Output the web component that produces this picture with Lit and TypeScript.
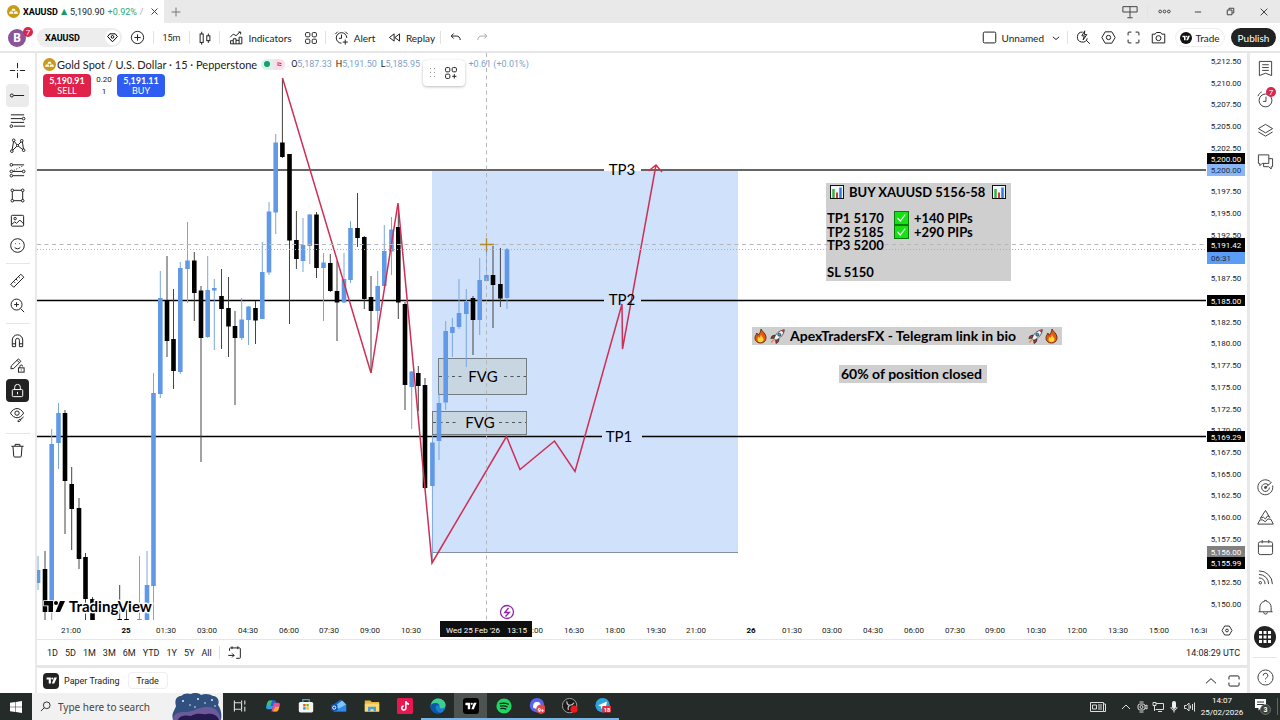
import { LitElement, html, svg, css, nothing } from "lit";
import { customElement } from "lit/decorators.js";
import { classMap } from "lit/directives/class-map.js";

/* ---------- icons ---------- */

const glyphs: Record<string, any> = {
  cross: svg`<path d="M9 1v5.500M9 11.500V17M1 9h5.500M11.500 9H17M8.500 9h1"/>`,
  ray: svg`<circle cx="3" cy="9" r="1.600"/><path d="M4.800 9H16"/>`,
  fib: svg`<path d="M2 3h14M2 7h12M2 11h14M5 15h12"/><circle cx="15.500" cy="7" r="1.400" fill="#fff"/><circle cx="2.500" cy="15" r="1.400" fill="#fff"/>`,
  pattern: svg`<path d="M3 15 5 4l4 5 5-5 1.500 10L9 9z"/><circle cx="5" cy="3.500" r="1.400" fill="#fff"/><circle cx="13.500" cy="4" r="1.400" fill="#fff"/><circle cx="3" cy="15" r="1.400" fill="#fff"/><circle cx="15.500" cy="14" r="1.400" fill="#fff"/><circle cx="9" cy="9" r="1.100" fill="#fff"/>`,
  position: svg`<path d="M4 3h12M4 10h12M4 14.500h12"/><path d="m5 9 10-5" stroke-dasharray="1.200 1.800"/><circle cx="2.500" cy="3" r="1.400" fill="#fff"/><circle cx="2.500" cy="10" r="1.400" fill="#fff"/><circle cx="2.500" cy="14.500" r="1.400" fill="#fff"/><circle cx="15.500" cy="10" r="1.400" fill="#fff"/>`,
  shape: svg`<path d="M3.500 3.500h11v11h-11z"/><circle cx="3.500" cy="3.500" r="1.400" fill="#fff"/><circle cx="14.500" cy="3.500" r="1.400" fill="#fff"/><circle cx="3.500" cy="14.500" r="1.400" fill="#fff"/><circle cx="14.500" cy="14.500" r="1.400" fill="#fff"/>`,
  image: svg`<rect x="2.500" y="3.500" width="13" height="11.500" rx="1"/><circle cx="6.500" cy="7" r="1.300"/><path d="m3 13 3-2.500 2 1.500 3.500-3.500 4 4"/>`,
  smile: svg`<circle cx="9" cy="9" r="7.200"/><path d="M6 11c1.500 2 4.500 2 6 0"/><path d="M6.800 6.700v.8M11.200 6.700v.8"/>`,
  ruler: svg`<path d="M1.800 13 12.500 2.300l3.200 3.200L5 16.200z"/><path d="m5 10 1.500 1.500M7.500 7.500 9 9M10 5l1.500 1.500"/>`,
  zoom: svg`<circle cx="8" cy="8" r="5.800"/><path d="M8 5.500v5M5.500 8h5M12.300 12.300 16 16"/>`,
  magnet: svg`<path d="M3.500 15.500V8.500a5.500 5.500 0 0 1 11 0v7h-3.500V8.700a2 2 0 0 0-4 0v6.800zM3.500 12.500H7M11 12.500h3.500"/>`,
  penlock: svg`<path d="m2 12.500.4-3L10 2l2.600 2.600L5 12.100zM8.500 3.500l2.600 2.600"/><rect x="10" y="11.500" width="6" height="4.500"/><path d="M11.500 11.500V10a1.500 1.500 0 0 1 3 0M13 13.200v1"/>`,
  lock: svg`<rect x="3.500" y="8" width="11" height="7.500" rx="1"/><path d="M6 8V5.500a3 3 0 0 1 6 0V8M9 10.500v2.500"/>`,
  eye: svg`<path d="M1.500 6.500c4-6.500 10-6.500 14 0-4 6.500-10 6.500-14 0z"/><circle cx="8.500" cy="6.500" r="2.300"/><path d="M9.500 15.500c0-2 1.500-2.500 3-2.500 0 2-1.500 2.500-3 2.500zm3-2.500 3-2.500"/>`,
  trash: svg`<path d="M2.500 4.500h13M6.500 4.300V2.500h5v1.800M4.200 4.500l.8 10.500a1 1 0 0 0 1 .9h6a1 1 0 0 0 1-.9l.8-10.500"/>`,
  plus: svg`<circle cx="9" cy="9" r="6.500"/><path d="M9 5.700v6.600M5.700 9h6.600"/>`,
  gem: svg`<path d="M4.500 3h9L17 7.500 9 16 1 7.500z"/><circle cx="9" cy="8" r="2.200"/>`,
  candles: svg`<rect x="3.500" y="4.500" width="3.500" height="9.500"/><path d="M5.250 2v2.500M5.250 14v2.500"/><rect x="11" y="6.500" width="3.500" height="5.500"/><path d="M12.750 4v2.500M12.750 12v2.500"/>`,
  indicators: svg`<path d="M2 16.500v-4h3.500v-2.500H9v2h4V8h3.500v8.500zM5.500 12.500v4M9 12v4.500M13 12v4.500"/><path d="m1.500 8 4-4L9 6l5-4.500M12 1.300h3v3"/>`,
  grid: svg`<rect x="2" y="2" width="5.500" height="5.500" rx="1.500"/><rect x="10.500" y="2" width="5.500" height="5.500" rx="1.500"/><rect x="2" y="10.500" width="5.500" height="5.500" rx="1.500"/><rect x="10.500" y="10.500" width="5.500" height="5.500" rx="1.500"/>`,
  gridplus: svg`<rect x="2" y="2" width="5.500" height="5.500" rx="1.500"/><rect x="10.500" y="2" width="5.500" height="5.500" rx="1.500"/><rect x="2" y="10.500" width="5.500" height="5.500" rx="1.500"/><path d="M13.250 10.500v5.500M10.500 13.250H16"/>`,
  alarm: svg`<path d="M15.300 9.500A6.300 6.300 0 1 0 9 15.800"/><path d="M9 5.500V10H6M1.500 5 4.500 2M16.500 5l-3-3M13.500 11.500v6M10.500 14.500h6"/>`,
  replay: svg`<path d="M8.500 4v10L2 9zM16 4v10L9.500 9z"/>`,
  undo: svg`<path d="M6.500 3.500 3 7l3.500 3.500M3.500 7h6.500c3.500 0 5.500 2 5.500 5.500"/>`,
  redo: svg`<path d="M11.500 3.500 15 7l-3.500 3.500M14.500 7H8c-3.500 0-5.500 2-5.500 5.500"/>`,
  square: svg`<rect x="1.500" y="2.500" width="15" height="13" rx="1.500"/>`,
  chevron: svg`<path d="m5 7.500 4 3.500 4-3.500"/>`,
  up: svg`<path d="m2.500 12 6.500-6 6.500 6"/>`,
  quick: svg`<path d="M8 2.500A6 6 0 1 0 13.500 10M12 12l4.500 4.500"/><path d="M10.500 1 7 7h3l-1.500 5L13 5.500h-3z" fill="#fff"/>`,
  gear: svg`<path d="M5 2.200h8L17 9l-4 6.800H5L1 9z"/><circle cx="9" cy="9" r="2.600"/>`,
  full: svg`<path d="M2.500 6.500v-3a1 1 0 0 1 1-1h3M11.500 2.500h3a1 1 0 0 1 1 1v3M15.500 11.500v3a1 1 0 0 1-1 1h-3M6.500 15.500h-3a1 1 0 0 1-1-1v-3"/>`,
  camera: svg`<path d="M1.500 5h3.500l1.500-2h5L13 5h3.500v10.500h-15z"/><circle cx="9" cy="9.800" r="3"/>`,
  list: svg`<path d="M2.500 1.500h13v15L9 14l-6.500 2.500zM5.500 5h7M5.500 8h7M5.500 11h7"/>`,
  clock: svg`<circle cx="9" cy="10" r="6.800"/><path d="M9.500 6v5H6.500M1 5.500C2 3 3 2 5 1"/>`,
  layers: svg`<path d="m9 2.500 7.500 4.500L9 11.500 1.500 7zM1.500 10.500 9 15l7.500-4.500"/>`,
  chat: svg`<path d="M1.500 2h11v9h-7l-2.500 2.500V11H1.500zM12.500 6h4v8.500H15V17l-2.500-2.500H7V11"/>`,
  target: svg`<path d="M14.600 3.400A7.900 7.900 0 1 0 16.500 7"/><path d="M12 6.300A4.100 4.100 0 1 0 13.100 9"/><circle cx="9" cy="9" r="1.100" fill="currentColor"/><path d="m9 9 6.500-5.500"/>`,
  pyramid: svg`<path d="M9 1.500 3.500 10l3.200-1.500L8.800 10.500 11.500 7l2 2z"/><path d="M3 11.500.8 16h16.400l-2.400-5-3.300-.5-2.700 3-3-2z"/>`,
  calendar: svg`<rect x="1.500" y="3" width="15" height="13.500" rx="2"/><path d="M1.500 7.500h15M5.500 1v3.500M12.500 1v3.500"/>`,
  feed: svg`<circle cx="3.500" cy="14.500" r="1.300"/><path d="M2 9.500a6 6 0 0 1 6.500 6.500M2 5.800A10 10 0 0 1 12.300 16M2 2a14 14 0 0 1 14.300 14"/>`,
  bell: svg`<path d="M1.500 13.500h15M3 13.500V9c0-3.500 2-6 5-6.500V1.500h2v1C13 3 15 5.500 15 9v4.500M7 14a2 2 0 0 0 4 0"/>`,
  help: svg`<circle cx="9" cy="9" r="8"/><path d="M6.500 7a2.500 2.500 0 1 1 3.500 2.300c-.8.400-1 .8-1 1.700M9 12.800v.8"/>`,
  goto: svg`<path d="M3 7V4.500a1 1 0 0 1 1-1h11a1 1 0 0 1 1 1V15a1 1 0 0 1-1 1h-4M6 1.500v3.500M13 1.500v3.500M1.500 12.500h7M6 10l2.500 2.500L6 15"/>`,
  split: svg`<path d="M2.500 7V4a1.500 1.500 0 0 1 1.500-1.500h10A1.500 1.500 0 0 1 15.500 4v3M15.500 11v3a1.500 1.500 0 0 1-1.500 1.500H4A1.500 1.500 0 0 1 2.500 14v-3"/>`,
  close: svg`<path d="m3 3 12 12M15 3 3 15"/>`,
  add: svg`<path d="M9 1v16M1 9h16"/>`,
  min: svg`<path d="M2 9h14"/>`,
  restore: svg`<path d="M2.500 6h9.500v9.500H2.500zM6 5.500V2.500h9.500V12H12.500"/>`,
  more: svg`<circle cx="3" cy="9" r="1.900"/><circle cx="9" cy="9" r="1.900"/><circle cx="15" cy="9" r="1.900"/>`,
  layout: svg`<path d="M1 3h16v6H1zM9 3v12M6 15.500h6"/>`,
  search: svg`<circle cx="11" cy="7" r="5.500"/><path d="m7 11-5.500 5.500"/>`,
  tradeview: svg`<path d="M1 4h7v10H4.500V7.500H1z" fill="currentColor" stroke="none"/><circle cx="10.300" cy="5.800" r="1.700" fill="currentColor" stroke="none"/><path d="M13.500 4H18l-4.500 10H9.500z" fill="currentColor" stroke="none"/>`,
};

const icon = (name: string, size = 16, weight = 1) => html`
  <svg width=${size} height=${size} viewBox="0 0 18 18" fill="none" stroke="currentColor"
    stroke-width=${(weight * 18) / size} aria-hidden="true">${glyphs[name]}</svg>`;

const coin = html`<svg width="13" height="13" viewBox="0 0 18 18" aria-hidden="true">
  <circle cx="9" cy="9" r="9" fill="#c99a17"/>
  <path d="M7.200 5.200h3.600l1 2.800H6.200zM3.800 9h4l1 3H2.800zM10.200 9h4l1 3H9.200z" fill="#fff"/></svg>`;

const base = css`
  * { box-sizing: border-box; }
  button, input { font: inherit; color: inherit; border: 0; background: none; padding: 0; margin: 0; }
  button { display: inline-flex; align-items: center; justify-content: center; flex: none; white-space: nowrap; cursor: pointer; }
  svg { display: block; flex: none; }
`;

/* ---------- chart ---------- */

// x centre, wick top, wick bottom, body top, body bottom, rising
type Candle = [number, number, number, number, number, number];
const candles: Candle[] = [
  [38, 556, 590, 570, 583, 1], [45, 551, 620, 569, 612, 0], [51.7, 429, 620, 444, 606, 1],
  [58.500, 403, 469, 413, 443, 1], [65, 410, 534, 413, 481, 0], [71.700, 467, 550, 484, 509, 0],
  [79, 498, 569, 508, 559, 0], [85.500, 553, 620, 557, 599, 0], [92.500, 597, 620, 599, 620, 0],
  [119.700, 585, 620, 619, 620, 0], [126.500, 609, 620, 619, 620, 0], [139.500, 556, 620, 619, 620, 1],
  [147, 551, 620, 585, 620, 1], [153.500, 373, 620, 393, 586, 1], [160.300, 271, 398, 298, 394, 1],
  [167, 256, 357, 300, 341, 0], [173.500, 289, 389, 339, 371, 0], [180.300, 262, 374, 268, 372, 1],
  [187.500, 222, 303, 260.500, 269, 1], [194.300, 252, 321, 260.500, 293, 0], [201, 286, 462, 290.500, 338, 0],
  [207.700, 256, 338, 290, 337, 1], [214.300, 279, 350, 288, 290.500, 1], [221.500, 269, 349, 296, 309, 0],
  [228.500, 277, 357, 308, 326.500, 0], [235, 311, 405, 326, 338, 0], [241.700, 298, 340, 319.500, 338, 1],
  [248.500, 306, 345, 306.500, 320, 1], [255.500, 301, 344, 308, 320.500, 0], [262.300, 242, 319, 272, 319, 1],
  [269, 202, 275, 211.500, 272.500, 1], [275.700, 134, 234, 142.500, 212.500, 1], [282.400, 78, 158, 142.500, 157, 0],
  [289.500, 154, 324, 154, 240.500, 0], [296.400, 211, 269, 240, 259, 0], [303, 218, 272, 245, 261, 1],
  [309.800, 214, 264, 214.500, 246, 1], [316.500, 212, 278, 214.500, 268, 0], [323.500, 253, 321, 262.500, 268, 1],
  [330.300, 254, 292, 263, 291, 0], [337, 261, 341, 291, 302.500, 0], [344, 253, 303, 279, 302.500, 1],
  [350.500, 221, 283, 228, 280, 1], [357.500, 193, 247, 228, 238, 0], [364.300, 236, 309, 237, 299, 0],
  [371, 276, 372, 297, 311, 0], [377.700, 271, 330, 286, 311, 1], [384.300, 225, 288, 251, 286, 1],
  [391.500, 217, 275, 229.500, 251.500, 1], [398.300, 205, 319, 227, 302.500, 0], [405, 302, 410, 304, 385, 0],
  [411.700, 371, 429, 371.500, 387, 1], [418.300, 366, 411, 373, 386, 0], [425, 378, 489, 385, 488, 0],
  [432.400, 435, 560, 442.500, 486, 1], [439, 393, 460, 403, 441, 1], [445.700, 321, 410, 331, 402.500, 1],
  [452.400, 318, 357, 327, 333, 1], [459, 279, 329, 313, 327, 1], [466.300, 289, 367, 302, 314, 1],
  [473, 296, 355, 298, 320, 0], [479.700, 258, 335, 280, 320, 1], [486.500, 250, 282, 275, 281, 1],
  [493, 246, 328, 275, 285, 0], [500.400, 248, 307, 284, 298.500, 0], [507, 248, 309, 249, 298, 1],
];

const TOP_PRICE = 5212.5;
const priceY = (p: number) => 61 + (TOP_PRICE - p) * 8.688;
const fmt = (p: number) => p.toLocaleString("en-US", { minimumFractionDigits: 2, maximumFractionDigits: 2 });
// ticks that lie wholly under a price tag are left out
const covered = [5200, 5190, 5185, 5155];
const ticks = Array.from({ length: 26 }, (_, i) => TOP_PRICE - i * 2.5).filter((p) => !covered.includes(p));

const times: [number, string, boolean?][] = [
  [71, "21:00"], [126, "25", true], [166, "01:30"], [207, "03:00"], [248, "04:30"], [289, "06:00"],
  [329, "07:30"], [370, "09:00"], [411, "10:30"], [533, "15:00"], [574, "16:30"], [615, "18:00"],
  [656, "19:30"], [696, "21:00"], [751, "26", true], [792, "01:30"], [832, "03:00"], [873, "04:30"],
  [914, "06:00"], [955, "07:30"], [995, "09:00"], [1036, "10:30"], [1077, "12:00"], [1118, "13:30"],
  [1159, "15:00"], [1200, "16:30"],
];

const priceTags: [number, number, string, string, string][] = [
  [153, 11, "5,200.00", "#000", "#fff"], [164, 12, "5,200.00", "#8ab6f5", "#1d2a44"],
  [252, 12, "06:31", "#5b9cf6", "#1d2a44"], [238, 14, "5,191.42", "#000", "#fff"],
  [295, 11, "5,185.00", "#000", "#fff"], [431, 11, "5,169.29", "#000", "#fff"],
  [546, 11, "5,156.00", "#808080", "#fff"], [557, 12, "5,155.99", "#000", "#fff"],
];

const levels: [number, number, number, string][] = [
  [170, 604, 641, "TP3"], [300.5, 604, 641, "TP2"], [436.5, 602, 642, "TP1"],
];

const zones: [number, number, number, number][] = [[438.5, 358.5, 88, 36], [432.5, 411.5, 94, 23]];

const barChart = (x: number, y: number) => svg`<g transform="translate(${x} ${y})">
  <rect x=".5" y=".5" width="13" height="13" fill="#f4f7fa" stroke="#111"/>
  <path d="M3.500 4v9" stroke="#2fb344" stroke-width="2.500"/><path d="M7 7.500V13" stroke="#d33" stroke-width="2"/><path d="M10.500 2.500V13" stroke="#2a7de1" stroke-width="2.500"/></g>`;
const check = (x: number, y: number) => svg`<g transform="translate(${x} ${y})">
  <rect x=".5" y=".5" width="14" height="13" fill="#17e017" stroke="#0a7a0a"/>
  <path d="m3.500 7 2.800 3 5-6.500" fill="none" stroke="#fff" stroke-width="1.200"/></g>`;
const flame = (x: number, y: number) => svg`<g transform="translate(${x} ${y})">
  <path d="M7 0c1 2.500 4.500 4 5 8 .4 3.800-2.300 6-5.500 6S.700 11.800 1 8.500C1.200 6.500 2.300 5.800 2.800 4c.8.700 1.200 1.500 1.300 2.300C5.800 4.500 6.800 2.500 7 0z" fill="#e8590c" stroke="#4a1c05" stroke-width=".8"/>
  <path d="M6.800 5.500c.6 2 2.700 2.800 2.700 5 0 1.800-1.300 2.700-3 2.700s-3-1-3-2.700c0-1.300.8-1.800 1.200-2.700.5.400.7.700.8 1.100.8-.9 1.200-2 1.300-3.400z" fill="#ffd43b"/></g>`;
const rocket = (x: number, y: number) => svg`<g transform="translate(${x} ${y})" stroke="#222" stroke-width=".7">
  <path d="M5 6 2 7 .800 9.500 4.500 9zM9 10l-.8 3L6 14.500 5.700 11z" fill="#c92a3c"/>
  <path d="M4 9.500C5.500 5 9 1.500 14.300.700 14 5.500 10.500 9 5.800 11.300z" fill="#eef3f7"/>
  <path d="M11 1.600 14.300.700 13.700 4z" fill="#c92a3c" stroke="none"/><circle cx="9.300" cy="5.700" r="1.500" fill="#3ba3d8"/>
  <path d="M4 10.500 1.300 13.500" stroke="#f08c1a" stroke-width="1.500"/></g>`;

@customElement("price-chart")
class PriceChart extends LitElement {
  static styles = css`
    :host { display: block; min-height: 0; }
    .plot { display: block; width: 100%; height: 100%; }
    .axis { font: 8px Roboto, sans-serif; fill: #222; text-anchor: middle; }
    .day { font-weight: 700; fill: #000; }
    .level { font: 15px Lato, sans-serif; text-anchor: middle; fill: #000; }
    .note { font: 700 13px Lato, sans-serif; fill: #000; }
    .caption { font: 700 14px Lato, sans-serif; fill: #000; }
    .brand { font: 700 15px Lato, sans-serif; fill: #000; stroke: #fff; stroke-width: 3px; paint-order: stroke; }
    .line { fill: none; stroke: #cf2f55; stroke-width: 1.5; }
  `;

  private candle([x, hi, lo, top, bottom, up]: Candle) {
    return svg`<path d="M${x} ${hi}V${lo}" stroke=${up ? "#7ba7dc" : "#444"} stroke-width="1"/>
      <rect x=${x - 2.3} y=${top} width="4.600" height=${bottom - top} fill=${up ? "#6199e6" : "#000"}/>`;
  }

  render() {
    return html`<svg class="plot" viewBox="37 53 1210 587" preserveAspectRatio="xMinYMin meet" role="img" aria-label="XAUUSD 15 minute chart">
      <rect x="432" y="171" width="306" height="381" fill="#cfe1fb"/>
      <path d="M432 552.500H738" stroke="#8291a5"/>
      ${zones.map(([x, y, w, h]) => svg`<rect x=${x} y=${y} width=${w} height=${h} fill="#c8d6e2" stroke="#737d83"/>`)}
      <path d="M439 376.500h25M504 376.500h22M433 422.500h26M499 422.500h27" stroke="#4d565c" stroke-dasharray="3 3.500"/>
      ${levels.map(([y, a, b]) => svg`<path d="M37 ${y}H${a}M${b} ${y}H1206" stroke=${y === 170 ? "#333" : "#000"} stroke-width="1.500"/>`)}
      ${candles.map((c) => this.candle(c))}
      <path class="line" d="M282.500 78 371 373 398 203 432 563 506.500 436.500 520 469.500 554.500 441 575 471.500 622 304 622.500 349 656 165M648.500 171 656 165 662 172"/>
      <text class="level" x="622" y="175">TP3</text>
      <text class="level" x="622" y="305">TP2</text>
      <text class="level" x="619" y="442">TP1</text>
      <text class="level" x="483" y="382">FVG</text>
      <text class="level" x="480" y="428">FVG</text>

      <rect x="826" y="183" width="185" height="98" fill="#cfcfcf"/>
      <rect x="752" y="327" width="310" height="18" fill="#cfcfcf"/>
      <rect x="839" y="365" width="148" height="18" fill="#cfcfcf"/>
      <path d="M37 244.500H1206M486.500 53V620" stroke="#b4b6bb" stroke-dasharray="4 3.500"/>
      <path d="M37 249.500H1206" stroke="#9db3cc" stroke-dasharray="1 2"/>
      <path d="M480 244.500h14M486.500 238v14" stroke="#b08a2c" stroke-width="1.300"/>

      ${barChart(830, 185)}${barChart(992, 185)}${check(894, 211)}${check(894, 225)}
      <text class="note"><tspan x="849" y="197">BUY XAUUSD 5156-58</tspan>
        <tspan x="827" y="223">TP1 5170</tspan><tspan x="914">+140 PIPs</tspan>
        <tspan x="827" y="237">TP2 5185</tspan><tspan x="914">+290 PIPs</tspan>
        <tspan x="827" y="250">TP3 5200</tspan>
        <tspan x="827" y="277">SL 5150</tspan></text>
      ${flame(754, 329)}${rocket(770, 329)}
      <text class="caption" x="790" y="341">ApexTradersFX - Telegram link in bio</text>
      ${rocket(1028, 329)}${flame(1045, 329)}
      <text class="caption" x="841" y="379">60% of position closed</text>

      <g transform="translate(43 599)"><path d="M1 2h9v11H5.500V6.500H1z" fill="#000" stroke="#fff" stroke-width="1.500" paint-order="stroke"/>
        <circle cx="13" cy="4" r="2" fill="#000"/><path d="M17 2h5l-5 11h-4.500z" fill="#000"/></g>
      <text class="brand" x="69" y="612">TradingView</text>
      <circle cx="507" cy="612" r="6.500" fill="#fff" stroke="#8e24aa" stroke-width="1.300"/>
      <path d="m508.500 608-3.800 4.500h4.600l-3.800 4" fill="none" stroke="#8e24aa" stroke-width="1.300"/>

      ${ticks.map((p) => svg`<text class="axis" x="1226" y=${Math.round(priceY(p)) + 3}>${fmt(p)}</text>`)}
      ${priceTags.map(([y, h, label, bg, ink]) => svg`<rect x="1207" y=${y} width="38" height=${h} fill=${bg}/>
        <text class="axis" x=${label.length < 6 ? 1221 : 1226} y=${y + h / 2 + 3} style="fill:${ink}">${label}</text>`)}
      ${times.map(([x, label, day]) => svg`<text class=${day ? "axis day" : "axis"} x=${x} y="633">${label}</text>`)}
      <rect x="1207" y="622" width="40" height="16" fill="#fff"/>
      <path d="M1224.700 626h4.600l2.700 4.500-2.700 4.500h-4.600l-2.700-4.500z" fill="none" stroke="#333"/><circle cx="1227" cy="630.500" r="1.400" fill="none" stroke="#333"/>
      <rect x="440" y="621" width="92" height="16" fill="#0f0f0f"/>
      <text class="axis" x="473" y="633" style="fill:#fff">Wed 25 Feb '26</text>
      <text class="axis" x="517" y="633" style="fill:#fff">13:15</text>
      <path d="M37 639.500H1247" stroke="#e6e6e6"/>
    </svg>`;
  }
}

/* ---------- taskbar ---------- */

const apps: [string, any, string?][] = [
  ["Task view", svg`<path d="M3 3v14M3 6h9v8H3M12 3v2M12 15v2M16 3v5M16 11v6" fill="none" stroke="#ddd" stroke-width="1.400"/>`],
  ["Copilot", svg`<path d="M6 3h6l-3 11H4c-3 0-3-2-2-5 .8-3 1.500-6 4-6z" fill="#2d9bf0"/><path d="M2 9c1-4 2-6 4-6h3L6 11z" fill="#35c26b"/><path d="M14 17H8l3-11h5c3 0 3 2 2 5-.8 3-1.500 6-4 6z" fill="#e0529c"/><path d="M14 17h-4l3-6h5c-1 4-2 6-4 6z" fill="#f5a623"/><path d="M9 3h3c1.500 0 2 1 2.300 3H11l-1 4H7z" fill="#2b5fd9"/>`],
  ["Store", svg`<path d="M6 5V2h8v3" fill="none" stroke="#3bb0ee" stroke-width="1.500"/><rect x="1" y="5" width="18" height="13" rx="2" fill="#f4f4f4"/><path d="M6.500 7.500h3v3h-3z" fill="#f25022"/><path d="M10.500 7.500h3v3h-3z" fill="#7fba00"/><path d="M6.500 11.500h3v3h-3z" fill="#00a4ef"/><path d="M10.500 11.500h3v3h-3z" fill="#ffb900"/>`],
  ["Outlook", svg`<path d="m3 8 9-6 7 6v9H3z" fill="#1d63c9"/><path d="m6 9 8-6 5 5-9 7z" fill="#7cc7f7"/><path d="m3 17 16-9v9z" fill="#2f8bea"/><rect x="0" y="8" width="8" height="8" rx="1.500" fill="#0f4fa8"/><circle cx="4" cy="12" r="2" fill="none" stroke="#fff" stroke-width="1.200"/>`],
  ["Files", svg`<path d="M1 3h7l1.500 2H19v12H1z" fill="#e8b63a"/><path d="M1 7h18v10H1z" fill="#fbd972"/><path d="M5 17v-6h10v6h-3v-3H8v3z" fill="#4a9fd8"/>`],
  ["TikTok", svg`<rect width="20" height="20" rx="2" fill="#e8174f"/><path d="M11 4v8.500a2.500 2.500 0 1 1-2.500-2.500M11 4c.3 2.300 1.700 3.500 4 3.700" fill="none" stroke="#fff" stroke-width="2"/>`],
  ["Edge", svg`<circle cx="10" cy="10" r="9.500" fill="#1b7fd1"/><path d="M1 9C2 3.500 6 .5 10 .5c5.500 0 9.500 3.800 9.500 8 0 2.800-2 4.500-4.700 4.500-2.300 0-3.300-.8-2.600-2C12.500 8 10.500 6.500 8 6.500 4.500 6.500 2 8 1 9z" fill="#3fd08f"/><path d="M1 9c3-4 9-3.500 10.500 0-3-.8-5 1-4.500 4 .5 2.800 3 5 6.500 5C6 21 0 16 1 9z" fill="#0d55a5"/>`, "open"],
  ["TradingView", svg`<rect width="20" height="20" rx="4" fill="#000"/><path d="M3 6h6v8H6V9H3z" fill="#fff"/><circle cx="11" cy="7.300" r="1.300" fill="#fff"/><path d="M13.500 6H17l-3.500 8h-3z" fill="#fff"/>`, "active"],
  ["Spotify", svg`<circle cx="10" cy="10" r="9.500" fill="#1ed760"/><path d="M4.500 7c4-1.200 8-.8 11.500 1M5 10.300c3.500-1 6.500-.6 9.500 1M5.500 13.300c3-.7 5-.4 7.500.8" fill="none" stroke="#102015" stroke-width="1.600"/>`, "open"],
  ["Discord", svg`<circle cx="10" cy="9" r="9" fill="#5865f2"/><path d="M5 12c0-3 1-6 2-6.500 2-.7 4-.7 6 0 1 .5 2 3.500 2 6.500-3 2-7 2-10 0z" fill="#fff"/><circle cx="15" cy="14" r="6" fill="#e5484d"/><text x="15" y="17" class="tag">9+</text>`, "open"],
  ["OBS", svg`<circle cx="9.500" cy="9.500" r="9" fill="#1a1a1a" stroke="#bbb"/><path d="M6 4c0 4 2 5 4 5s4-1 5-3M10 9c-2 1-3 3-2 6" fill="none" stroke="#ccc" stroke-width="1.400"/><circle cx="15" cy="14" r="4.500" fill="#f01818"/>`, "open"],
  ["Telegram", svg`<circle cx="9.500" cy="9" r="9" fill="#2ba5dc"/><path d="m4 9 11-4.500-2 10-3.500-2.500-1.500 2-.5-3.500z" fill="#fff"/><rect x="9" y="10" width="12" height="8" rx="1" fill="#e0303a"/><text x="15" y="17" class="tag">18</text>`, "open"],
];

@customElement("task-bar")
class TaskBar extends LitElement {
  static styles = [base, css`
    :host { display: flex; height: 27px; background: #252b28; color: #fff; font: 8px Roboto, sans-serif; overflow: hidden; }
    .start { width: 32px; }
    .search { display: flex; align-items: center; gap: 7px; width: 191px; padding-left: 8px; background: #f1f1f1; color: #333; font: 10px "Noto Sans", sans-serif; }
    .field { width: 100px; outline: none; }
    .field::placeholder { color: #444; opacity: 1; }
    .art { align-self: stretch; margin-left: auto; }
    .app { width: 33px; border-bottom: 2px solid transparent; }
    .open { border-bottom-color: #78b4e4; }
    .active { background: #4c5350; border-bottom-color: #78b4e4; }
    .tag { font: 700 7px Roboto, sans-serif; fill: #fff; text-anchor: middle; }
    .tray { display: flex; align-items: center; gap: 4px; margin-left: auto; }
    .news { margin-right: 10px; }
    .clock { width: 44px; text-align: center; line-height: 12px; }
    .alerts { width: 30px; border-right: 1px solid #666; margin-right: 2px; }
  `];

  render() {
    return html`
      <button class="start" aria-label="Start"><svg width="12" height="12" viewBox="0 0 12 12" fill="#fff"><path d="M0 1.700 5.500 1v4.700H0zM6 .900 12 0v5.700H6zM0 6.300h5.500V11L0 10.300zM6 6.300h6V12l-6-.9z"/></svg></button>
      <label class="search">${icon("search", 11)}
        <input class="field" aria-label="Search" placeholder="Type here to search" />
        <svg class="art" width="52" height="27" viewBox="0 0 52 27" aria-hidden="true">
          <path d="M2 27C0 20 4 17 5 13 3 7 6 3 10 3c3-3 7-3 10-2 4-2 8-1 10 1 4-2 9-1 12 1 4 0 7 4 5 9 3 4 4 9 3 15z" fill="#31507f"/>
          <path d="M2 27c0-6 5-8 11-8 10 0 16-6 24-5 8 0 11 5 13 13z" fill="#6c5a9a"/>
          <path d="M7 27c2-5 8-5 13-4 7-4 12-1 16-2 6-1 11 2 12 6z" fill="#241a4e"/>
          <g fill="#dff1ff"><circle cx="12" cy="8" r="1"/><circle cx="19" cy="12" r=".8"/><circle cx="27" cy="6" r="1"/><circle cx="34" cy="10" r=".8"/><circle cx="41" cy="7" r="1"/><circle cx="24" cy="14" r=".8"/><circle cx="44" cy="13" r=".8"/></g>
        </svg>
      </label>
      ${apps.map(([name, art, state]) => html`<button class=${classMap({ app: true, open: state === "open", active: state === "active" })} aria-label=${name}>
        <svg width="16" height="16" viewBox="0 0 20 20">${art}</svg></button>`)}
      <div class="tray">
        <svg class="news" width="16" height="12" viewBox="0 0 16 12" fill="none" stroke="#ddd"><path d="M.5 1.500h13v9H.500zM13.500 3h2v7.500h-2M2.500 4h4v4h-4zM8 4h4M8 6h4M8 8h4"/></svg>
        <svg width="12" height="12" viewBox="0 0 12 12" fill="none" stroke="#ddd"><path d="m2 8 4-4 4 4"/></svg>
        <svg width="12" height="12" viewBox="0 0 12 12" fill="none" stroke="#ddd"><rect x="2" y="3" width="7" height="6" rx="2"/><circle cx="5.500" cy="6" r="1.500"/><path d="M3.500 1h4M3.500 11h4M9 5l2-1v4L9 7"/></svg>
        <svg width="12" height="12" viewBox="0 0 12 12" fill="none" stroke="#ddd"><path d="M4 2.500h7.500v6H3.500M1 1.500h3v3H1zM2.500 4.500V10M6 10.500h4"/></svg>
        <svg width="12" height="12" viewBox="0 0 12 12" fill="#eee"><rect x="4" y="0" width="4" height="8" rx="2"/><path d="M3 6c0 4 6 4 6 0M6 9v2.500" fill="none" stroke="#eee"/></svg>
        <svg width="12" height="12" viewBox="0 0 12 12" fill="none" stroke="#ddd"><path d="M.5 4.500h2L5 2v8L2.500 7.500h-2zM6.500 4.500v3M8.500 3v6M10.500 1.500v9"/></svg>
        <time class="clock">14:07<br />25/02/2026</time>
        <button class="alerts" aria-label="Notifications"><svg width="16" height="17" viewBox="0 0 16 17"><path d="M0 1h11v9H6l-2.500 2.500V10H0z" fill="#fff"/><path d="M2 4h7M2 6.500h7" stroke="#333"/><circle cx="10.500" cy="11.500" r="5" fill="#3a403d" stroke="#888" stroke-width=".7"/><text class="tag" x="10.500" y="14">3</text></svg></button>
      </div>`;
  }
}

/* ---------- page ---------- */

const tools = [
  ["cross", "ray", "fib", "pattern", "position", "shape", "image", "smile"],
  ["ruler", "zoom"], ["magnet", "penlock", "lock", "eye"], ["trash"],
];
const ranges = ["1D", "5D", "1M", "3M", "6M", "YTD", "1Y", "5Y", "All"];
const sep = html`<span class="sep"></span>`;

@customElement("app-root")
class AppRoot extends LitElement {
  static styles = [base, css`
    :host { display: flex; flex-direction: column; height: 100vh; overflow: hidden; background: #fff; color: #222; font: 10px Lato, sans-serif; }
    .tabs { display: flex; align-items: center; height: 23px; background: #e9e9e9; color: #444; flex: none; }
    .tab { display: flex; align-items: center; align-self: stretch; width: 164px; padding: 0 5px 0 7px; background: #fff; white-space: nowrap; font: 9px Roboto, sans-serif; }
    .tabname { display: flex; align-items: center; gap: 3px; flex: 1; min-width: 0; color: #222; }
    .tabname b { color: #000; }
    .gain { color: #159a6d; font: 8px "DejaVu Sans", sans-serif; }
    .chg { color: #22ab7d; }
    .fresh { width: 24px; color: #777; }
    .window { display: flex; align-items: center; margin-left: auto; }
    .window button { width: 33px; }
    .window .wide { width: 34px; }
    .bar { display: flex; align-items: center; height: 30px; padding: 1px 4px 0 0; border-bottom: 2px solid #e6e6e6; flex: none; }
    .sep { width: 1px; height: 13px; background: #e2e2e2; flex: none; }
    .avatar { position: relative; width: 37px; height: 27px; }
    .face { display: grid; place-items: center; width: 18px; height: 18px; border-radius: 9px; background: #8b5699; color: #fff; font: 700 12px "Noto Sans", sans-serif; margin-right: 3px; }
    .badge { position: absolute; top: 3px; right: 4px; display: grid; place-items: center; width: 10px; height: 10px; border-radius: 5px; background: #db2450; color: #fff; font: 8px Roboto, sans-serif; }
    .symbol { justify-content: space-between; width: 85px; height: 19px; padding: 0 2px 0 8px; border-radius: 10px; background: #ededed; font: 700 9px Roboto, sans-serif; color: #000; }
    .gem { display: grid; place-items: center; width: 15px; height: 15px; border-radius: 8px; background: #fff; }
    .b29 { width: 29px; } .b31 { width: 31px; } .b35 { width: 35px; } .b25 { width: 25px; }
    .period { font: 9px Roboto, sans-serif; }
    .text { gap: 5px; }
    .w76 { width: 76px; padding-left: 5px; } .w57 { width: 57px; }
    .faded { color: #aaa; }
    .right { display: flex; align-items: center; margin-left: auto; }
    .layoutname { gap: 5px; padding-right: 4px; }
    .iconrow { display: flex; margin: 0 4px 0 3px; }
    .pill { gap: 3px; width: 50px; height: 19px; border: 1px solid #eee; border-radius: 10px; margin-right: 6px; }
    .disc { display: grid; place-items: center; width: 12px; height: 12px; border-radius: 6px; background: #111; color: #fff; }
    .publish { width: 45px; height: 19px; border-radius: 10px; background: #222; color: #fff; }
    .body { display: flex; flex: 1; min-height: 0; }
    .tools { display: flex; flex-direction: column; align-items: center; width: 37px; padding: 5px 0 0; border-right: 2px solid #e9e9e9; flex: none; }
    .tool { display: flex; width: 23px; height: 23px; margin: 1px 0; border-radius: 4px; }
    .rule { width: 24px; height: 1px; margin: 5px 0 4px; background: #e6e6e6; flex: none; }
    .picked { background: #ebebeb; }
    .locked { background: #222; color: #fff; }
    .center { display: flex; flex-direction: column; flex: 1; min-width: 0; }
    .stage { position: relative; flex: 1; min-height: 0; }
    .stage price-chart { height: 100%; }
    .over { position: absolute; top: 4px; left: 6px; display: flex; flex-direction: column; gap: 3px; }
    .legend { display: flex; align-items: center; height: 14px; gap: 4px; white-space: nowrap; font: 9px Roboto, sans-serif; color: #222; }
    .name { display: flex; align-items: center; gap: 1px; }
    .title { font: 11px Lato, sans-serif; }
    .status { display: grid; grid-template-columns: 1fr 1fr; place-items: center; width: 24px; height: 11px; margin-right: 2px; border-radius: 6px; background: linear-gradient(90deg, #dcf3ea 50%, #fbdce9 50%); color: #c2185b; font-weight: 700; }
    .live { width: 6px; height: 6px; border-radius: 3px; background: #14a06f; }
    .v { color: #7f9fc9; }
    .deal { display: flex; align-items: stretch; }
    .side { flex-direction: column; width: 48px; height: 23px; border-radius: 4px; color: #fff; font: 9px/10px Lato, sans-serif; }
    .side b { line-height: 10px; }
    .sell { background: #e0224a; } .buy { background: #2f5df2; }
    .spread { width: 26px; text-align: center; font: 8px/12px Roboto, sans-serif; }
    .float { position: absolute; top: 7px; left: 386px; display: flex; align-items: center; justify-content: space-evenly; width: 42px; height: 26px; border-radius: 4px; background: #fff; box-shadow: 0 1px 3px #0004; }
    .grip { color: #999; }
    .ranges { display: flex; align-items: center; height: 25px; padding: 0 7px 0 10px; gap: 7px; flex: none; white-space: nowrap; font: 9px Roboto, sans-serif; }
    .utc { margin-left: auto; }
    .broker { display: flex; align-items: center; height: 28px; padding: 0 6px; border-top: 3px solid #e6e6e6; flex: none; font: 9px Roboto, sans-serif; }
    .logo { display: grid; place-items: center; width: 16px; height: 16px; border-radius: 4px; background: #222; color: #fff; margin-right: 5px; }
    .trade { width: 40px; height: 17px; margin-left: 8px; border: 1px solid #eee; border-radius: 4px; }
    .panel { display: flex; gap: 9px; margin-left: auto; }
    .dock { display: flex; flex-direction: column; align-items: center; width: 33px; border-left: 3px solid #e9e9e9; flex: none; }
    .item { position: relative; width: 30px; height: 31px; color: #444; }
    .low { height: 30px; }
    .push { margin-top: auto; }
    .dots { display: grid; place-items: center; width: 22px; height: 22px; border-radius: 11px; background: #222; }
  `];

  private dockItem(name: string, extra = "", content?: any) {
    return html`<button class="item ${extra}" aria-label=${name}>${content ?? icon(name, 17)}${name === "clock" ? html`<span class="badge">7</span>` : nothing}</button>`;
  }

  render() {
    return html`
      <header class="tabs">
        <div class="tab">
          <span class="tabname">${coin}<b>XAUUSD</b><span class="gain">▲</span><span>5,190.90</span><span class="chg">+0.92%</span><span class="faded">/</span></span>
          <button aria-label="Close tab">${icon("close", 9)}</button>
        </div>
        <button class="fresh" aria-label="New tab">${icon("add", 10)}</button>
        <div class="window">
          <button class="wide" aria-label="Layouts">${icon("layout", 16)}</button>${sep}
          <button aria-label="More">${icon("more", 13)}</button>
          <button aria-label="Minimise">${icon("min", 8)}</button>
          <button aria-label="Restore">${icon("restore", 9)}</button>
          <button aria-label="Close">${icon("close", 10)}</button>
        </div>
      </header>

      <nav class="bar">
        <button class="avatar" aria-label="Account"><span class="face">B</span><span class="badge">7</span></button>
        <button class="symbol">XAUUSD<span class="gem">${icon("gem", 11)}</span></button>
        <button class="b31" aria-label="Compare">${icon("plus", 17)}</button>${sep}
        <button class="b35 period">15m</button>${sep}
        <button class="b29" aria-label="Candles">${icon("candles", 16)}</button>${sep}
        <button class="text w76">${icon("indicators", 14)}Indicators</button>
        <button class="b29" aria-label="Templates">${icon("grid", 14)}</button>${sep}
        <button class="text w57">${icon("alarm", 15)}Alert</button>
        <button class="text w57">${icon("replay", 13)}Replay</button>${sep}
        <button class="b29" aria-label="Undo">${icon("undo", 13)}</button>
        <button class="b25 faded" aria-label="Redo">${icon("redo", 13)}</button>
        <div class="right">
          <button class="layoutname">${icon("square", 15)}Unnamed${icon("chevron", 14)}</button>${sep}
          <div class="iconrow">${["quick", "gear", "full", "camera"].map((n) => html`<button class="b25" aria-label=${n}>${icon(n, 15)}</button>`)}</div>
          <button class="pill"><span class="disc">${icon("tradeview", 8)}</span>Trade</button>
          <button class="publish">Publish</button>
        </div>
      </nav>

      <main class="body">
        <aside class="tools">
          ${tools.map((group, i) => html`${i ? html`<span class="rule"></span>` : nothing}
            ${group.map((n) => html`<button class=${classMap({ tool: true, picked: n === "ray", locked: n === "lock" })} aria-label=${n}>${icon(n, 17)}</button>`)}`)}
        </aside>

        <section class="center">
          <div class="stage">
            <price-chart></price-chart>
            <div class="over">
              <div class="legend"><span class="name">${coin}<span class="title">Gold Spot / U.S. Dollar · 15 · Pepperstone</span></span>
                <span class="status"><i class="live"></i><span>≈</span></span>
                <span>O<span class="v">5,187.33</span></span><span>H<span class="v">5,191.50</span></span>
                <span>L<span class="v">5,185.95</span></span><span>C<span class="v">5,191.11</span></span>
                <span class="v">+0.61 (+0.01%)</span></div>
              <div class="deal"><button class="side sell"><b>5,190.91</b>SELL</button>
                <span class="spread">0.20<br />1</span>
                <button class="side buy"><b>5,191.11</b>BUY</button></div>
            </div>
            <div class="float">
              <svg class="grip" width="6" height="10" viewBox="0 0 6 10" fill="currentColor"><path d="M0 0h1v1H0zM4 0h1v1H4zM0 4h1v1H0zM4 4h1v1H4zM0 8h1v1H0zM4 8h1v1H4z"/></svg>
              <button aria-label="Add to favourites">${icon("gridplus", 14)}</button>
            </div>
          </div>
          <div class="ranges">${ranges.map((r) => html`<button>${r}</button>`)}
            ${sep}<button aria-label="Go to date">${icon("goto", 15)}</button>
            <span class="utc">14:08:29 UTC</span></div>
          <footer class="broker"><span class="logo">${icon("tradeview", 11)}</span>Paper Trading
            <button class="trade">Trade</button>
            <div class="panel"><button aria-label="Expand">${icon("up", 14)}</button><button aria-label="Maximise">${icon("split", 14)}</button></div>
          </footer>
        </section>

        <aside class="dock">
          ${["list", "clock", "layers", "chat"].map((n) => this.dockItem(n))}
          <div class="push"></div>
          ${["target", "pyramid", "calendar", "feed", "bell"].map((n) => this.dockItem(n, "low"))}
          ${this.dockItem("Products", "low", html`<span class="dots"><svg width="12" height="12" viewBox="0 0 12 12" fill="#fff"><path d="M0 0h3v3H0zM4.500 0h3v3h-3zM9 0h3v3H9zM0 4.500h3v3H0zM4.500 4.500h3v3h-3zM9 4.500h3v3H9zM0 9h3v3H0zM4.500 9h3v3h-3zM9 9h3v3H9z"/></svg></span>`)}
          <span class="rule"></span>
          ${this.dockItem("help")}
        </aside>
      </main>
      <task-bar></task-bar>
    `;
  }
}
